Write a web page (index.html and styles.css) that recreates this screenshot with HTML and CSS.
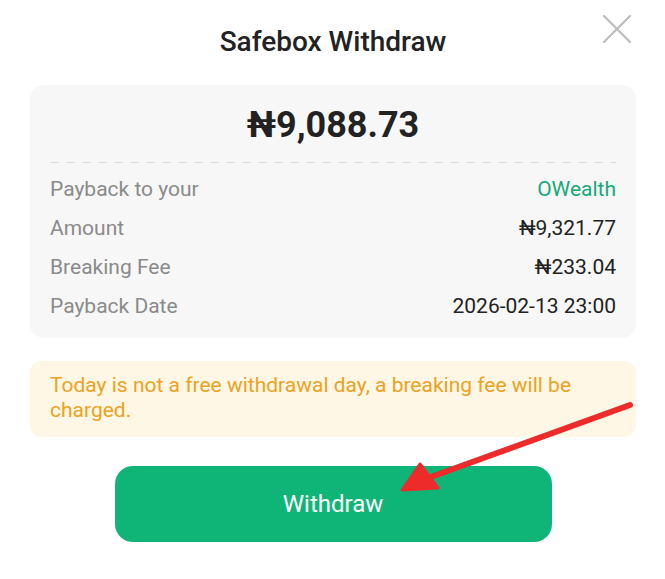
FILE: index.html
```html
<!DOCTYPE html>
<html lang="en">
<head>
    <meta charset="UTF-8">
    <meta name="viewport" content="width=device-width, initial-scale=1.0">
    <title>Safebox Withdraw</title>
    <link rel="stylesheet" href="styles.css">
</head>
<body>
    <div class="sheet">
        <div class="header">
            <h1 class="title">Safebox Withdraw</h1>
            <button class="close-btn" aria-label="Close">
                <svg width="30" height="30" viewBox="0 0 30 30">
                    <path d="M2 2 L28 28 M28 2 L2 28" stroke="#bcbcbc" stroke-width="2.2" stroke-linecap="round" fill="none"/>
                </svg>
            </button>
        </div>

        <div class="summary">
            <div class="total">₦9,088.73</div>
            <div class="dashed"></div>
            <div class="row">
                <span class="label">Payback to your</span>
                <span class="value green">OWealth</span>
            </div>
            <div class="row">
                <span class="label">Amount</span>
                <span class="value">₦9,321.77</span>
            </div>
            <div class="row">
                <span class="label">Breaking Fee</span>
                <span class="value">₦233.04</span>
            </div>
            <div class="row">
                <span class="label">Payback Date</span>
                <span class="value">2026-02-13 23:00</span>
            </div>
        </div>

        <div class="notice">Today is not a free withdrawal day, a breaking fee will be charged.</div>

        <div class="actions">
            <button class="withdraw-btn">Withdraw</button>
        </div>

        <!-- red annotation arrow -->
        <svg class="arrow" width="665" height="579" viewBox="0 0 665 579">
            <path d="M630 405 L428 478" stroke="#ee2b2b" stroke-width="6" stroke-linecap="round" fill="none"/>
            <path d="M402 490 L420 464 L438 488 Z" fill="#ee2b2b" stroke="#ee2b2b" stroke-width="3" stroke-linejoin="round"/>
        </svg>
    </div>
</body>
</html>
```

FILE: styles.css
```css
body {
    margin: 0;
    background: #fff;
    font-family: Roboto, "Noto Sans", "DejaVu Sans", sans-serif;
}

.sheet {
    position: relative;
    width: 665px;
    height: 579px;
    padding: 0 29px 0 30px;
    box-sizing: border-box;
    overflow: hidden;
}

.header {
    padding-top: 25px;
    margin-bottom: 26px;
    text-align: center;
}

.title {
    margin: 0;
    font-size: 28px;
    line-height: 34px;
    font-weight: 500;
    color: #222;
}

.close-btn {
    position: absolute;
    top: 14px;
    right: 33px;
    padding: 0;
    border: none;
    background: none;
    cursor: pointer;
}

.summary {
    background-color: #f7f7f7;
    border-radius: 14px;
    padding: 18px 20px 13px;
}

.total {
    text-align: center;
    font-size: 36px;
    line-height: 44px;
    font-weight: 700;
    color: #222;
}

.dashed {
    height: 1px;
    margin: 15px 0 6px;
    background-image: repeating-linear-gradient(to right, #dcdcdc 0 9px, transparent 9px 16px);
}

.row {
    display: flex;
    justify-content: space-between;
    align-items: center;
    height: 39px;
    font-size: 21px;
}

.label {
    color: #8a8a8a;
}

.value {
    color: #222;
}

.value.green {
    color: #17a97a;
}

.notice {
    margin-top: 23px;
    background-color: #fff7e5;
    border-radius: 12px;
    padding: 12px 20px 14px;
    font-size: 21px;
    line-height: 25px;
    color: #eda222;
}

.actions {
    display: flex;
    justify-content: center;
    margin-top: 29px;
}

.withdraw-btn {
    width: 437px;
    height: 76px;
    border: none;
    border-radius: 18px;
    background-color: #0fb577;
    color: #fff;
    font-family: inherit;
    font-size: 24px;
    cursor: pointer;
}

.arrow {
    position: absolute;
    left: 0;
    top: 0;
    pointer-events: none;
}
```
